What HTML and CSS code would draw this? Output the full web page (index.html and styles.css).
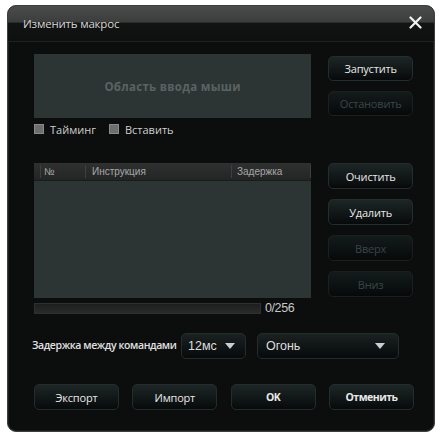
FILE: index.html
```html
<!DOCTYPE html>
<html>
<head>
<meta charset="utf-8">
<link rel="stylesheet" href="styles.css">
</head>
<body>
<div class="dialog">
  <div class="titlebar">
    <span class="title">Изменить макрос</span>
    <svg class="close" width="13" height="13" viewBox="0 0 13 13"><path d="M1.5 1.5 L11.5 11.5 M11.5 1.5 L1.5 11.5" stroke="#f2f2f2" stroke-width="2.2" stroke-linecap="round"/></svg>
  </div>
  <div class="content">
    <div class="row top">
      <div class="main">
        <div class="mouse-area">Область ввода мыши</div>
        <div class="checks">
          <label class="check"><span class="box"></span>Тайминг</label>
          <label class="check"><span class="box"></span>Вставить</label>
        </div>
      </div>
      <div class="side side-top">
        <div class="btn">Запустить</div>
        <div class="btn disabled">Остановить</div>
      </div>
    </div>
    <div class="row mid">
      <div class="main">
        <div class="table">
          <div class="thead">
            <span class="col c0"></span>
            <span class="col c1">№</span>
            <span class="col c2">Инструкция</span>
            <span class="col c3">Задержка</span>
          </div>
          <div class="tbody"></div>
        </div>
        <div class="progress-row">
          <div class="progress"></div>
          <span class="count">0/256</span>
        </div>
      </div>
      <div class="side side-mid">
        <div class="btn">Очистить</div>
        <div class="btn">Удалить</div>
        <div class="btn disabled">Вверх</div>
        <div class="btn disabled">Вниз</div>
      </div>
    </div>
    <div class="delay-row">
      <span class="delay-label">Задержка между командами</span>
      <div class="select small"><span>12мс</span><span class="arrow"></span></div>
      <div class="select wide"><span>Огонь</span><span class="arrow"></span></div>
    </div>
    <div class="bottom">
      <div class="btn">Экспорт</div>
      <div class="btn">Импорт</div>
      <div class="btn bold">OK</div>
      <div class="btn bold narrow">Отменить</div>
    </div>
  </div>
</div>
</body>
</html>
```

FILE: styles.css
```css
html, body {
  margin: 0;
  padding: 0;
  background: #ffffff;
}
body {
  font-family: "Open Sans", "Liberation Sans", sans-serif;
  padding: 5px 0 0 7px;
}
.dialog {
  width: 426px;
  height: 425px;
  background: #0c0d0d;
  border: 1px solid #3c3f3f;
  border-radius: 9px;
  overflow: hidden;
  box-shadow: inset 0 0 0 1px #1b1d1d;
}
.titlebar {
  height: 35px;
  display: flex;
  align-items: center;
  justify-content: space-between;
  padding: 0 12px 0 15px;
  background: linear-gradient(to bottom, #4a4b4b 0%, #3c3d3d 45%, #121313 50%, #0e0f0f 100%);
  border-bottom: 1px solid #202222;
}
.title {
  color: #d6d6d6;
  font-size: 11.5px;
  letter-spacing: -0.2px;
}
.close {
  display: block;
  margin-top: -2px;
}
.content {
  padding: 12px 21px 0 26px;
}
.row {
  display: flex;
  gap: 17px;
}
.main {
  width: 278px;
}
.side {
  width: 85px;
  display: flex;
  flex-direction: column;
}
.side-top {
  padding-top: 2px;
  gap: 10px;
}
.side-mid {
  gap: 10px;
}
.mouse-area {
  height: 64px;
  background: #2d3434;
  display: flex;
  align-items: center;
  justify-content: center;
  color: #5b6262;
  font-weight: bold;
  font-size: 11.5px;
  letter-spacing: 0.3px;
}
.checks {
  display: flex;
  gap: 13px;
  margin-top: 4px;
  height: 14px;
  align-items: center;
}
.check {
  display: flex;
  align-items: center;
  gap: 6px;
  color: #cfcfcf;
  font-size: 11px;
}
.box {
  width: 8px;
  height: 8px;
  background: #6e6e6e;
  border: 1px solid #8a8a8a;
}
.btn {
  height: 25px;
  border-radius: 5px;
  background: linear-gradient(to bottom, #1d2626 0%, #121818 50%, #070a0a 100%);
  border: 1px solid #252c2c;
  box-sizing: border-box;
  display: flex;
  align-items: center;
  justify-content: center;
  color: #e8e8e8;
  font-size: 11px;
  letter-spacing: -0.2px;
}
.side-mid .btn {
  height: 26px;
}
.btn.disabled {
  color: #3a4646;
  background: linear-gradient(to bottom, #141b1b 0%, #0d1212 50%, #070909 100%);
  border-color: #1a2020;
}
.btn.bold {
  font-weight: bold;
  font-size: 10.5px;
  letter-spacing: -0.5px;
}
.mid {
  margin-top: 27px;
}
.table {
  height: 135px;
  background: #2d3434;
  display: flex;
  flex-direction: column;
}
.thead {
  height: 17px;
  background: linear-gradient(to bottom, #2f3131, #232525);
  display: flex;
  align-items: center;
  font-family: "Liberation Sans", Arial, sans-serif;
  font-size: 10px;
  color: #a8a8a8;
  border-bottom: 1px solid #1a1c1c;
}
.col {
  height: 13px;
  line-height: 13px;
  border-right: 1px solid #3d4040;
  box-sizing: border-box;
  padding-left: 4px;
}
.c0 { width: 7px; padding: 0; }
.c1 { width: 45px; padding-left: 3px; }
.c2 { width: 146px; padding-left: 6px; }
.c3 { width: 79px; padding-left: 5px; }
.progress-row {
  display: flex;
  align-items: center;
  margin-top: 4px;
  height: 12px;
}
.progress {
  width: 227px;
  height: 11px;
  background: linear-gradient(to bottom, #1d1f1f, #2a2c2c);
  border: 1px solid #2e3030;
  box-sizing: border-box;
}
.count {
  margin-left: 4px;
  font-family: "Liberation Sans", Arial, sans-serif;
  font-size: 12.5px;
  color: #c8c8c8;
  letter-spacing: -0.4px;
}
.delay-row {
  display: flex;
  align-items: center;
  margin-top: 19px;
  height: 26px;
}
.delay-label {
  font-size: 10.5px;
  color: #e0e0e0;
  font-weight: 600;
  letter-spacing: -0.4px;
  width: 149px;
  margin-left: -2px;
  margin-top: -2px;
  white-space: nowrap;
}
.select {
  height: 26px;
  border-radius: 5px;
  background: linear-gradient(to bottom, #1b2222 0%, #101515 50%, #070a0a 100%);
  border: 1px solid #252c2c;
  box-sizing: border-box;
  display: flex;
  align-items: center;
  justify-content: space-between;
  color: #dedede;
  font-family: "Liberation Sans", Arial, sans-serif;
  font-size: 12.5px;
  padding: 0 10px 0 6px;
}
.select.small {
  width: 65px;
}
.select.wide {
  width: 142px;
  margin-left: 11px;
  padding-left: 8px;
  padding-right: 13px;
}
.arrow {
  width: 0;
  height: 0;
  border-left: 5px solid transparent;
  border-right: 5px solid transparent;
  border-top: 6px solid #c8cfd0;
}
.bottom {
  display: flex;
  justify-content: space-between;
  width: 380px;
  margin-top: 25px;
}
.bottom .btn {
  width: 85px;
  height: 26px;
}
```
